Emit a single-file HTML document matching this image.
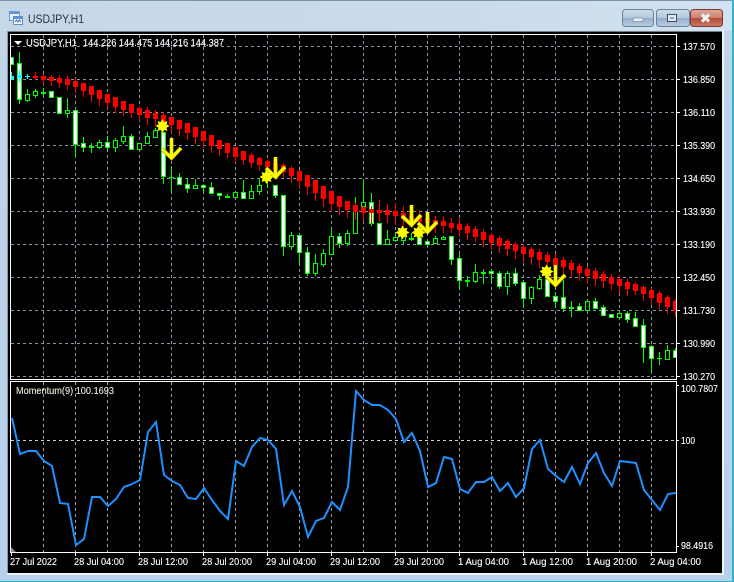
<!DOCTYPE html>
<html><head><meta charset="utf-8"><title>USDJPY,H1</title>
<style>
html,body{margin:0;padding:0;background:#b9d1ea;width:734px;height:582px;overflow:hidden}
svg{display:block}
text{font-family:"Liberation Sans",sans-serif;font-size:10px;fill:#fff;stroke:#fff;stroke-width:.12}
</style></head><body>
<svg width="734" height="582" viewBox="0 0 734 582" xmlns="http://www.w3.org/2000/svg">
<defs>
<linearGradient id="bg" x1="0" y1="0" x2="0" y2="1"><stop offset="0" stop-color="#c4d6e8"/><stop offset=".06" stop-color="#c2d5e8"/><stop offset=".2" stop-color="#bdd3ea"/><stop offset="1" stop-color="#b8d1eb"/></linearGradient>
<linearGradient id="tb" x1="0" y1="0" x2="1" y2="0"><stop offset="0" stop-color="#c6d7e7"/><stop offset=".6" stop-color="#c9dbec"/><stop offset="1" stop-color="#d2e2f0"/></linearGradient>
<linearGradient id="bt" x1="0" y1="0" x2="0" y2="1"><stop offset="0" stop-color="#cbdbea"/><stop offset=".48" stop-color="#b4c9de"/><stop offset=".52" stop-color="#94aecb"/><stop offset="1" stop-color="#b8cee4"/></linearGradient>
<linearGradient id="cl" x1="0" y1="0" x2="0" y2="1"><stop offset="0" stop-color="#dfa898"/><stop offset=".48" stop-color="#cc8472"/><stop offset=".52" stop-color="#b04a38"/><stop offset="1" stop-color="#cc7a66"/></linearGradient>
<clipPath id="mc"><rect x="11" y="35" width="665" height="344"/></clipPath>
<clipPath id="sc"><rect x="11" y="382" width="665" height="170"/></clipPath>
</defs>
<rect width="734" height="582" fill="url(#bg)"/>
<rect width="734" height="31" fill="url(#tb)"/>
<path d="M0 .5H734" stroke="#7f93a8" fill="none"/>
<rect x="0" y="581" width="734" height="1" fill="#2bb5cf"/>
<rect x="732" y="0" width="2" height="582" fill="#2bb5cf"/>
<rect x="722" y="30" width="2" height="545" fill="#eef3f8"/>
<rect x="7" y="573" width="717" height="2" fill="#eef3f8"/>
<rect x="7" y="31" width="715" height="1" fill="#6f7b88"/>
<rect x="7" y="31" width="1" height="542" fill="#8a97a5"/>
<rect x="8" y="32" width="714" height="541" fill="#000"/>

<!-- title icon -->
<g shape-rendering="crispEdges">
<rect x="9.5" y="11.5" width="10" height="9" fill="#e8f2fb" stroke="#6f9fd0"/>
<rect x="10" y="12" width="9" height="2" fill="#5a93d6"/>
<rect x="13.5" y="16.5" width="9" height="8" fill="#f3f8fd" stroke="#5a8fc8"/>
<rect x="14" y="17" width="8" height="2" fill="#5a93d6"/>
</g>
<path d="M15 22l1.500-2 1.500 2 1.500-2 1.500 2" stroke="#3b6ea8" fill="none"/>
<text x="28" y="23" style="font-size:12px;fill:#26323f;stroke:none" textLength="56" lengthAdjust="spacingAndGlyphs">USDJPY,H1</text>

<!-- buttons -->
<rect x="622.500" y="9.500" width="31" height="17" rx="3" fill="url(#bt)" stroke="#6d8198"/>
<rect x="633" y="18" width="10" height="3.500" fill="#e8eef5" stroke="#5f6f82" stroke-width=".5"/>
<rect x="656.500" y="9.500" width="33" height="17" rx="3" fill="url(#bt)" stroke="#6d8198"/>
<rect x="667.500" y="14.500" width="9" height="7" fill="#dfe8f1" stroke="#3f4f60" stroke-width="1"/>
<rect x="670" y="17" width="4" height="2" fill="#8ea6bf"/>
<rect x="690.500" y="9.500" width="32" height="17" rx="3" fill="url(#cl)" stroke="#7c3a30"/>
<path d="M702 14.500L709 21.500M709 14.500L702 21.500" stroke="#f2f2f2" stroke-width="3.200" fill="none"/>

<!-- frames -->
<g shape-rendering="crispEdges" fill="none">
<path d="M10.500 34.500H676.500V379.500H10.500Z" stroke="#fff"/>
<path d="M10.500 381.500H676.500V552.500H10.500Z" stroke="#fff"/>
<!-- main grid -->
<path stroke="#8696a6" stroke-dasharray="3 3" d="M11 46.500H676M11 79.500H676M11 112.500H676M11 145.500H676M11 178.500H676M11 211.500H676M11 244.500H676M11 277.500H676M11 310.500H676M11 343.500H676M11 376.500H676"/>
<path stroke="#8696a6" stroke-dasharray="3 3" d="M43.500 35V379M75.500 35V379M107.500 35V379M139.500 35V379M171.500 35V379M203.500 35V379M235.500 35V379M267.500 35V379M299.500 35V379M331.500 35V379M363.500 35V379M395.500 35V379M427.500 35V379M459.500 35V379M491.500 35V379M523.500 35V379M555.500 35V379M587.500 35V379M619.500 35V379M651.500 35V379"/>
<!-- sub grid -->
<path stroke="#a0a0a0" stroke-dasharray="3 3" d="M43.500 382V552M75.500 382V552M107.500 382V552M139.500 382V552M171.500 382V552M203.500 382V552M235.500 382V552M267.500 382V552M299.500 382V552M331.500 382V552M363.500 382V552M395.500 382V552M427.500 382V552M459.500 382V552M491.500 382V552M523.500 382V552M555.500 382V552M587.500 382V552M619.500 382V552M651.500 382V552"/>
<path stroke="#d0d0d0" stroke-dasharray="3 3" d="M11 440.500H676"/>
<!-- ticks -->
<path stroke="#fff" d="M676 46.500h4M676 79.500h4M676 112.500h4M676 145.500h4M676 178.500h4M676 211.500h4M676 244.500h4M676 277.500h4M676 310.500h4M676 343.500h4M676 376.500h4M676 385.500h3M676 440.500h3M676 546.500h3"/>
<path stroke="#fff" d="M11.500 552v4M75.500 552v4M139.500 552v4M203.500 552v4M267.500 552v4M331.500 552v4M395.500 552v4M459.500 552v4M523.500 552v4M587.500 552v4M651.500 552v4"/>
</g>

<g clip-path="url(#mc)" shape-rendering="crispEdges">
<!-- green wicks -->
<path fill="none" stroke="#0f0" d="M19.500 52V104M27.500 89V102M35.500 89V98M43.500 88V96M59.500 97V114M67.500 98V118M75.500 110V158M83.500 137V152M91.500 143V153M99.500 140V149M107.500 136V151M115.500 138V152M123.500 126V144M131.500 134V149M139.500 143V150M147.500 132V144M155.500 128V137M163.500 132V184M171.500 166V193M179.500 173V185M187.500 178V193M195.500 179V188M203.500 184V193M211.500 182V194M219.500 193V200M227.500 194V198M243.500 180V198M251.500 185V198M259.500 178V195M267.500 163V188M275.500 185V198M283.500 195V256M291.500 232V250M299.500 235V265M307.500 247V276M315.500 254V276M323.500 249V267M331.500 227V254M339.500 233V248M347.500 230V246M355.500 197V234M363.500 179V206M371.500 193V226M379.500 223V244M387.500 230V244M395.500 232V240M403.500 236V244M411.500 233V241M419.500 235V244M435.500 236V244M443.500 236V239M451.500 236V265M459.500 254V290M467.500 276V287M475.500 264V283M483.500 269V284M491.500 270V283M499.500 271V289M507.500 271V295M515.500 268V286M523.500 280V307M531.500 286V304M539.500 275V290M547.500 279V297M555.500 292V307M563.500 280V312M571.500 301V317M579.500 303V311M587.500 301V310M595.500 298V308M603.500 305V316M611.500 314V317M619.500 311V317M627.500 311V323M635.500 312V327M643.500 319V363M651.500 345V373M659.500 352V365M667.500 345V360M675.500 348V358"/>
<!-- crosses -->
<path fill="#0f0" d="M41 92h5v2h-5zM89 146h5v2h-5zM169 177h5v1h-5zM225 196h5v2h-5zM409 238h5v2h-5zM465 280h5v2h-5zM481 272h5v2h-5zM569 307h5v2h-5zM657 358h5v1h-5z"/>
<!-- black bodies -->
<path fill="#000" stroke="#0f0" d="M25.500 94.500h4v6h-4zM33.500 91.500h4v4h-4zM65.500 110.500h4v3h-4zM97.500 142.500h4v5h-4zM113.500 140.500h4v7h-4zM121.500 136.500h4v5h-4zM137.500 143.500h4v6h-4zM145.500 136.500h4v7h-4zM153.500 130.500h4v7h-4zM193.500 185.500h4v3h-4zM233.500 192.500h4v5h-4zM249.500 191.500h4v7h-4zM257.500 185.500h4v6h-4zM265.500 171.500h4v6h-4zM289.500 235.500h4v11h-4zM313.500 263.500h4v10h-4zM321.500 253.500h4v11h-4zM329.500 236.500h4v18h-4zM345.500 233.500h4v10h-4zM353.500 208.500h4v25h-4zM361.500 202.500h4v4h-4zM385.500 239.500h4v5h-4zM393.500 237.500h4v3h-4zM401.500 236.500h4v4h-4zM433.500 238.500h4v5h-4zM441.500 237.500h4v2h-4zM473.500 272.500h4v9h-4zM505.500 273.500h4v13h-4zM529.500 287.500h4v11h-4zM537.500 279.500h4v9h-4zM585.500 301.500h4v9h-4zM617.500 313.500h4v4h-4zM665.500 350.500h4v9h-4z"/>
<!-- white bodies -->
<path fill="#fff" stroke="#0f0" d="M9.500 57.500h4v7h-4zM17.500 63.500h4v36h-4zM49.500 91.500h4v6h-4zM57.500 97.500h4v16h-4zM73.500 110.500h4v34h-4zM81.500 143.500h4v4h-4zM105.500 142.500h4v5h-4zM129.500 136.500h4v13h-4zM161.500 132.500h4v44h-4zM177.500 177.500h4v7h-4zM185.500 184.500h4v4h-4zM201.500 185.500h4v2h-4zM209.500 187.500h4v6h-4zM217.500 193.500h4v2h-4zM241.500 192.500h4v6h-4zM273.500 185.500h4v10h-4zM281.500 195.500h4v51h-4zM297.500 235.500h4v17h-4zM305.500 252.500h4v21h-4zM337.500 236.500h4v7h-4zM369.500 202.500h4v21h-4zM377.500 223.500h4v21h-4zM417.500 237.500h4v7h-4zM425.500 241.500h4v3h-4zM449.500 236.500h4v23h-4zM457.500 258.500h4v22h-4zM489.500 271.500h4v2h-4zM497.500 273.500h4v13h-4zM513.500 273.500h4v10h-4zM521.500 282.500h4v16h-4zM545.500 279.500h4v17h-4zM553.500 296.500h4v5h-4zM561.500 297.500h4v11h-4zM577.500 306.500h4v4h-4zM593.500 301.500h4v7h-4zM601.500 307.500h4v8h-4zM609.500 314.500h4v3h-4zM625.500 313.500h4v6h-4zM633.500 318.500h4v8h-4zM641.500 325.500h4v22h-4zM649.500 346.500h4v12h-4zM673.500 350.500h4v7h-4z"/>
<!-- red wicks -->
<path fill="none" stroke="#f00" d="M35.500 72V80M43.500 74V85M51.500 75V86M59.500 75V88M67.500 75V90M75.500 78V93M83.500 83V97M91.500 86V102M99.500 90V106M107.500 94V109M115.500 97V113M123.500 101V116M131.500 104V118M139.500 106V121M147.500 107V125M155.500 110V126M163.500 112V130M171.500 117V133M179.500 120V136M187.500 123V140M195.500 127V144M203.500 131V148M211.500 135V153M219.500 140V156M227.500 143V159M235.500 147V163M243.500 151V165M251.500 153V168M259.500 157V171M267.500 160V172M275.500 160V175M283.500 163V178M291.500 166V183M299.500 170V189M307.500 175V195M315.500 180V201M323.500 186V207M331.500 191V212M339.500 196V215M347.500 201V218M355.500 203V220M363.500 206V222M371.500 206V224M379.500 200V222M387.500 204V223M395.500 203V225M403.500 206V228M411.500 210V228M419.500 210V230M427.500 213V231M435.500 216V233M443.500 216V233M451.500 218V233M459.500 219V237M467.500 223V240M475.500 226V242M483.500 229V247M491.500 233V250M499.500 236V253M507.500 239V256M515.500 242V259M523.500 244V262M531.500 247V265M539.500 249V268M547.500 252V270M555.500 254V273M563.500 257V275M571.500 260V278M579.500 263V281M587.500 266V284M595.500 268V286M603.500 271V288M611.500 274V290M619.500 275V294M627.500 279V296M635.500 282V295M643.500 285V301M651.500 288V305M659.500 291V310M667.500 295V314M675.500 299V317"/>
<!-- red bodies -->
<path fill="#f00" d="M33 76h5v2h-5zM41 76h5v4h-5zM49 77h5v4h-5zM57 78h5v5h-5zM65 79h5v6h-5zM73 81h5v6h-5zM81 83h5v8h-5zM89 86h5v9h-5zM97 90h5v9h-5zM105 94h5v9h-5zM113 97h5v10h-5zM121 101h5v9h-5zM129 104h5v9h-5zM137 108h5v7h-5zM145 110h5v8h-5zM153 113h5v6h-5zM161 115h5v7h-5zM169 117h5v8h-5zM177 120h5v9h-5zM185 123h5v10h-5zM193 127h5v10h-5zM201 131h5v10h-5zM209 135h5v11h-5zM217 140h5v9h-5zM225 143h5v10h-5zM233 147h5v10h-5zM241 151h5v9h-5zM249 155h5v8h-5zM257 158h5v7h-5zM265 161h5v6h-5zM273 163h5v7h-5zM281 165h5v7h-5zM289 168h5v8h-5zM297 171h5v10h-5zM305 175h5v12h-5zM313 180h5v13h-5zM321 186h5v13h-5zM329 191h5v13h-5zM337 196h5v11h-5zM345 201h5v9h-5zM353 205h5v7h-5zM361 207h5v6h-5zM369 209h5v4h-5zM377 210h5v3h-5zM385 210h5v5h-5zM393 211h5v5h-5zM401 213h5v6h-5zM409 215h5v6h-5zM417 216h5v6h-5zM425 218h5v5h-5zM433 220h5v5h-5zM441 221h5v5h-5zM449 223h5v5h-5zM457 224h5v6h-5zM465 226h5v7h-5zM473 229h5v8h-5zM481 232h5v8h-5zM489 235h5v8h-5zM497 238h5v8h-5zM505 241h5v8h-5zM513 244h5v7h-5zM521 247h5v7h-5zM529 249h5v8h-5zM537 252h5v8h-5zM545 255h5v7h-5zM553 258h5v7h-5zM561 260h5v7h-5zM569 263h5v7h-5zM577 266h5v7h-5zM585 269h5v7h-5zM593 271h5v8h-5zM601 274h5v7h-5zM609 277h5v7h-5zM617 279h5v7h-5zM625 282h5v7h-5zM633 284h5v7h-5zM641 287h5v7h-5zM649 290h5v8h-5zM657 293h5v10h-5zM665 297h5v10h-5zM673 301h5v10h-5z"/>
<!-- cyan -->
<path fill="#0ff" d="M11 76h3v4h-3zM11 72h1v8h-1zM17 75h5v3h-5zM19 70h1v12h-1zM25 76h5v1h-5zM27 74h1v5h-1z"/>
</g>

<!-- arrows -->
<g fill="none">
<path stroke="#b09a00" stroke-width="4" d="M171.500 138V157M162 149L171.500 158L181 148M275.500 157V176M266 168L275.500 177L285 167M411.500 205V224M402 216L411.500 225L421 215M427.500 212V231M418 223L427.500 232L437 222M555.500 265V284M546 276L555.500 285L565 275"/>
<path stroke="#ff0" stroke-width="2.800" d="M171.500 138V157M162 149L171.500 158L181 148M275.500 157V176M266 168L275.500 177L285 167M411.500 205V224M402 216L411.500 225L421 215M427.500 212V231M418 223L427.500 232L437 222M555.500 265V284M546 276L555.500 285L565 275"/>
</g>
<!-- stars -->
<g fill="#ff0">
<polygon transform="translate(162.500 126)" points="0,-7 1.700,-4 4.900,-4.900 4,-1.700 7,0 4,1.700 4.900,4.900 1.700,4 0,7 -1.700,4 -4.900,4.900 -4,1.700 -7,0 -4,-1.700 -4.900,-4.900 -1.700,-4"/>
<polygon transform="translate(266.500 177)" points="0,-7 1.700,-4 4.900,-4.900 4,-1.700 7,0 4,1.700 4.900,4.900 1.700,4 0,7 -1.700,4 -4.900,4.900 -4,1.700 -7,0 -4,-1.700 -4.900,-4.900 -1.700,-4"/>
<polygon transform="translate(402.500 232.500)" points="0,-7 1.700,-4 4.900,-4.900 4,-1.700 7,0 4,1.700 4.900,4.900 1.700,4 0,7 -1.700,4 -4.900,4.900 -4,1.700 -7,0 -4,-1.700 -4.900,-4.900 -1.700,-4"/>
<polygon transform="translate(418.500 232.500)" points="0,-7 1.700,-4 4.900,-4.900 4,-1.700 7,0 4,1.700 4.900,4.900 1.700,4 0,7 -1.700,4 -4.900,4.900 -4,1.700 -7,0 -4,-1.700 -4.900,-4.900 -1.700,-4"/>
<polygon transform="translate(546.500 271.500)" points="0,-7 1.700,-4 4.900,-4.900 4,-1.700 7,0 4,1.700 4.900,4.900 1.700,4 0,7 -1.700,4 -4.900,4.900 -4,1.700 -7,0 -4,-1.700 -4.900,-4.900 -1.700,-4"/>
</g>

<!-- header -->
<path d="M14 41h8l-4 4z" fill="#fff"/>
<text x="26" y="46" textLength="51" lengthAdjust="spacingAndGlyphs">USDJPY,H1</text>
<text x="83" y="46" textLength="141" lengthAdjust="spacingAndGlyphs">144.226 144.475 144.216 144.387</text>

<!-- price labels -->
<g>
<text x="683" y="50" textLength="32" lengthAdjust="spacingAndGlyphs">137.570</text>
<text x="683" y="83" textLength="32" lengthAdjust="spacingAndGlyphs">136.850</text>
<text x="683" y="116" textLength="32" lengthAdjust="spacingAndGlyphs">136.110</text>
<text x="683" y="149" textLength="32" lengthAdjust="spacingAndGlyphs">135.390</text>
<text x="683" y="182" textLength="32" lengthAdjust="spacingAndGlyphs">134.650</text>
<text x="683" y="215" textLength="32" lengthAdjust="spacingAndGlyphs">133.930</text>
<text x="683" y="248" textLength="32" lengthAdjust="spacingAndGlyphs">133.190</text>
<text x="683" y="281" textLength="32" lengthAdjust="spacingAndGlyphs">132.450</text>
<text x="683" y="314" textLength="32" lengthAdjust="spacingAndGlyphs">131.730</text>
<text x="683" y="347" textLength="32" lengthAdjust="spacingAndGlyphs">130.990</text>
<text x="683" y="380" textLength="32" lengthAdjust="spacingAndGlyphs">130.270</text>
<text x="681" y="392" textLength="37" lengthAdjust="spacingAndGlyphs">100.7807</text>
<text x="681" y="444" textLength="14" lengthAdjust="spacingAndGlyphs">100</text>
<text x="681" y="549" textLength="32" lengthAdjust="spacingAndGlyphs">98.4916</text>
</g>

<!-- momentum -->
<text x="16" y="394" textLength="98" lengthAdjust="spacingAndGlyphs" style="fill:#efe8dc;stroke:#efe8dc">Momentum(9) 100.1693</text>
<g clip-path="url(#sc)">
<path d="M11 547L16 552H11Z" fill="#888"/>
<polyline fill="none" stroke="#1e90ff" stroke-width="2" points="12,418 20,454 28,451 36,451 44,461 52,466 60,503 68,504 76,545 84,539 92,497 100,497 108,506 116,499 124,487 132,484 140,480 148,432 156,422 164,475 172,481 180,485 188,498 196,499 204,488 212,500 220,511 228,519 236,461 244,466 252,447 260,438 268,440 276,449 284,505 292,491 300,507 308,537 316,521 324,518 332,502 340,510 348,487 356,391 364,400 372,405 380,405 388,410 396,419 404,442 412,433 420,451 428,487 436,483 444,457 452,459 460,489 468,493 476,482 484,482 492,477 500,491 508,483 516,497 524,488 532,449 540,440 548,469 556,476 564,482 572,467 580,484 588,463 596,453 604,473 612,486 620,461 628,462 636,463 644,490 652,500 660,510 668,494 676,493"/>
</g>

<!-- date labels -->
<g>
<text x="10" y="565" textLength="47" lengthAdjust="spacingAndGlyphs">27 Jul 2022</text>
<text x="74" y="565" textLength="50" lengthAdjust="spacingAndGlyphs">28 Jul 04:00</text>
<text x="138" y="565" textLength="50" lengthAdjust="spacingAndGlyphs">28 Jul 12:00</text>
<text x="202" y="565" textLength="50" lengthAdjust="spacingAndGlyphs">28 Jul 20:00</text>
<text x="266" y="565" textLength="50" lengthAdjust="spacingAndGlyphs">29 Jul 04:00</text>
<text x="330" y="565" textLength="50" lengthAdjust="spacingAndGlyphs">29 Jul 12:00</text>
<text x="394" y="565" textLength="50" lengthAdjust="spacingAndGlyphs">29 Jul 20:00</text>
<text x="458" y="565" textLength="51" lengthAdjust="spacingAndGlyphs">1 Aug 04:00</text>
<text x="522" y="565" textLength="51" lengthAdjust="spacingAndGlyphs">1 Aug 12:00</text>
<text x="586" y="565" textLength="51" lengthAdjust="spacingAndGlyphs">1 Aug 20:00</text>
<text x="650" y="565" textLength="51" lengthAdjust="spacingAndGlyphs">2 Aug 04:00</text>
</g>
</svg>
</body></html>
